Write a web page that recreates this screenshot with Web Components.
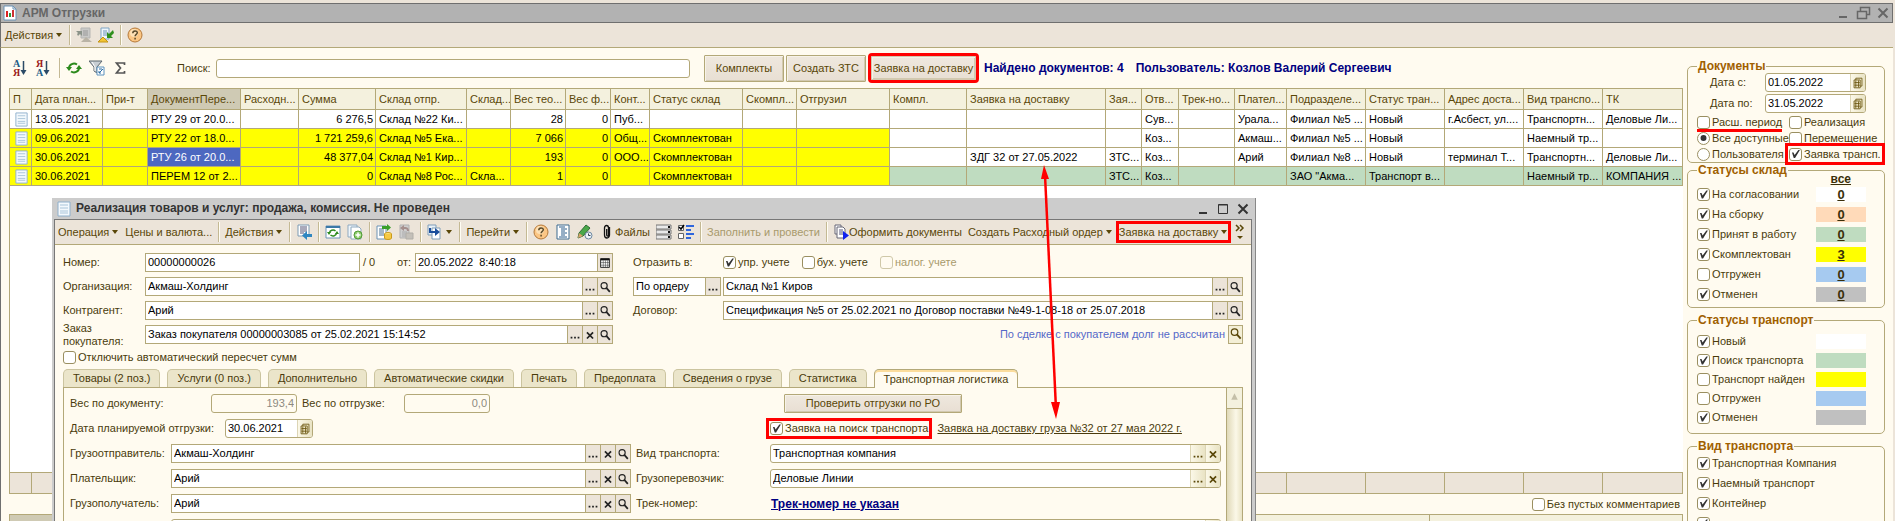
<!DOCTYPE html>
<html lang="ru">
<head>
<meta charset="utf-8">
<title>АРМ Отгрузки</title>
<style>
    html, body {
        margin: 0;
        height: 100%;
        overflow: hidden;
        background: #ece4d9;
        color: #4a3b0c;
        font: 11px/13px "Liberation Sans", Arial, sans-serif;
    }
    body {
        position: relative;
    }
</style>
</head>
<body>
<shipping-desk></shipping-desk>

<script>
const ICONS = {
    report: '<path d="M2 1h9l3 3v11H2z" fill="#fff" stroke="#6d93b5"/><path d="M11 1v3h3" fill="none" stroke="#6d93b5"/><path d="M4 6h2v6H4z" fill="#d22"/><path d="M7 8h2v4H7z" fill="#2a9a3a"/><path d="M10 5h2v7h-2z" fill="#c33"/>',
    doc: '<path d="M2 1h12v14H2z" fill="#f4f9fd" stroke="#8fb0cc"/><path d="M4 4h8M4 7h8M4 10h8M4 12h8" stroke="#a9c4d9"/>',
    loadOff: '<path d="M5 1h9v10H5z" fill="#c9c9c7" stroke="#b5b5b3"/><path d="M7 4h5M7 6h5M7 8h5" stroke="#999"/><path d="M0 4h6v5L4 7l-2 2-1-2 1-1z" fill="#8b9389"/><path d="M5 15l5-5 6 5z" fill="#b9b3a6"/>',
    load: '<path d="M3 1h8v11H3z" fill="#eef5fb" stroke="#7fa5c4"/><path d="M5 4h4M5 6h4M5 8h4" stroke="#6b94b8"/><path d="M15 3l-4 4-2-2v6h6L13 9l3-3z" fill="#2f8f1d"/><path d="M0 15l5-5 5 5z" fill="#f2c534" stroke="#c49415"/>',
    help: '<circle cx="8" cy="8" r="7" fill="#fbc684" stroke="#b4793a"/><circle cx="7" cy="6" r="4" fill="#fde0b5"/><path d="M5.800 6.200c0-3 4.500-3 4.500-.4 0 1.600-2.200 1.600-2.200 3.400M8.100 10.800v1.600" fill="none" stroke="#5a4a2a" stroke-width="1.500"/>',
    refresh: '<path d="M3 8a5 4.500 0 0 1 8-3.500M13 8a5 4.500 0 0 1-8 3.500" fill="none" stroke="#2c8a1c" stroke-width="2"/><path d="M0 7h6L3 11zM10 9h6l-3-4z" fill="#2c8a1c"/>',
    filter: '<path d="M0 1h13L8 7v6l-3-2V7z" fill="#c8ced3" stroke="#5b666f"/><path d="M3 2l3 5v4" fill="none" stroke="#fff"/><path d="M8 7h7v8H8z" fill="#fff" stroke="#5d92bd"/><path d="M10 9h3M10 13l4-4M10 11v2h2" stroke="#2f6ea5" fill="none"/>',
    sigma: '<path d="M12.500 5V3h-8l4 5-4 5h8v-2" fill="none" stroke="#555" stroke-width="1.700"/>',
    fromBase: '<path d="M2 1h11v11H2z" fill="#fff" stroke="#7d9bb3"/><path d="M4 3h7M4 5h7M4 7h7M4 9h4" stroke="#557"/><path d="M16 10h-5V7l-5 4.500 5 4.500v-3h5z" fill="#2f86c0"/>',
    reread: '<path d="M1 2h14v12H1z" fill="#fff" stroke="#6d93b5"/><path d="M1 2h14v2H1z" fill="#3a78a8"/><path d="M4.500 9a3.500 3 0 0 1 6-2M11.500 9a3.500 3 0 0 1-6 2" fill="none" stroke="#2c8a1c" stroke-width="1.500"/><path d="M2 8h4l-2 3zM10 10h4l-2-3z" fill="#2c8a1c"/>',
    copyNew: '<path d="M1 1h9v12H1z" fill="#eef5fb" stroke="#8fa9bf"/><path d="M4 3h8l2 2v10H4z" fill="#fff" stroke="#8fa9bf"/><circle cx="11" cy="11" r="4" fill="#8fce6d" stroke="#4f9a35"/><path d="M11 8.500v5M8.500 11h5" stroke="#fff" stroke-width="1.500"/>',
    post: '<path d="M1 2h9v13H1z" fill="#fff" stroke="#6d93b5"/><path d="M3 5h5M3 7h5M3 9h5M3 11h5" stroke="#48708f"/><path d="M6 2h5V0l4 3.500L11 7V5H6z" fill="#3aa02a"/><ellipse cx="12" cy="10" rx="3.500" ry="1.500" fill="#ffe477" stroke="#c99a1b"/><path d="M8.500 10v4a3.500 1.500 0 0 0 7 0v-4" fill="#f6c944" stroke="#c99a1b"/>',
    unpost: '<path d="M2 1h9v13H2z" fill="#cfcfcf" stroke="#b1b1b1"/><path d="M4 8h5M4 10h5M4 12h5" stroke="#aaa"/><path d="M11 7c0-4-3-4-5-4V1L2 4l4 3V5c2 0 3 0 3 2z" fill="#a58f8d"/><path d="M8 9h7v6H8z" fill="#c4c0b9" stroke="#b1aea8"/>',
    basis: '<path d="M1 1h8v10H1z" fill="#e8f1f8" stroke="#7f9db8"/><path d="M5 4h8v11H5z" fill="#fff" stroke="#7f9db8"/><path d="M2 4v5h6v3l5-4-5-4v3H4V4z" fill="#1c4f9c"/>',
    list: '<path d="M2 1h12v14H2z" fill="#fff" stroke="#3d6a8f"/><path d="M4 3h6M6 5h6M6 7h4M6 9h6M6 11h4M4 13h8" stroke="#2c5f8c"/>',
    pencil: '<path d="M1 14l1-5 7-8 4 3-7 8z" fill="#4aa84a" stroke="#2d6b35"/><path d="M1 14l1-5 4 3z" fill="#d8a36d"/><circle cx="11.500" cy="11.500" r="3.500" fill="#eef3f8" stroke="#6a86a0"/><path d="M11.500 9.500v2h2" stroke="#345" fill="none"/>',
    clip: '<path d="M10.500 3v8a2.500 3 0 0 1-5 0V4a2 2.500 0 0 1 4 0v7a.8 1 0 0 1-1.800 0V5" fill="none" stroke="#111" stroke-width="1.300"/>',
    bars: '<path d="M0 1h15v4H0zM0 6h15v4H0zM0 11h15v4H0z" fill="#e9e9e9" stroke="#777"/><path d="M12 2h2v2h-2zM12 7h2v2h-2zM12 12h2v2h-2z" fill="#111"/>',
    checks: '<path d="M0.500 1.500h5v5h-5zM0.500 9.500h5v5h-5z" fill="#fff" stroke="#666"/><path d="M1 3l2 2 3-4" fill="none" stroke="#000" stroke-width="1.500"/><path d="M8 2h8M8 6h5M8 10h8M8 14h5" stroke="#2f66dd" stroke-width="2"/>',
    docsRun: '<path d="M2 1h6v9H2z" fill="#fff" stroke="#667"/><path d="M4 3h6l2 2v9H4z" fill="#fff" stroke="#667"/><path d="M6 6h4M6 8h4M6 10h4" stroke="#557"/><path d="M10 7l6 4.500-6 4.500z" fill="#12e"/>',
    calendar: '<path d="M5.500 2.500h7v9h-7z" fill="#f7f1d4" stroke="#6a5610"/><path d="M3.500 4.500h7v9h-7z" fill="#f7f1d4" stroke="#6a5610"/><path d="M4 7.500h6M4 10.500h6M5.500 5v8M8.500 5v8" stroke="#6a5610"/>',
    grid: '<path d="M3 3h10v10H3z" fill="#fff" stroke="#111"/><path d="M3 4h10" stroke="#111" stroke-width="2"/><path d="M3 7.500h10M3 10.500h10M6 5v8M8.500 5v8M11 5v8" stroke="#333" stroke-width=".6"/>',
    dots: '<path d="M3 10h2v2H3zM7 10h2v2H7zM11 10h2v2h-2z" fill="currentColor"/>',
    cross: '<path d="M4.500 5l7 7M11.500 5l-7 7" stroke="currentColor" stroke-width="2"/>',
    find: '<circle cx="7" cy="6.500" r="3.500" fill="none" stroke="currentColor" stroke-width="1.300"/><path d="M9.500 9l4 4.500" stroke="currentColor" stroke-width="2"/>',
    min: '<path d="M4 12h8" stroke="currentColor" stroke-width="2"/>',
    max: '<path d="M3.500 3.500h9v9h-9zM3.500 4h9" fill="none" stroke="currentColor"/>',
    restore: '<path d="M5.500 6V2.500h9v7H12M2.500 6.500h9v7h-9z" fill="none" stroke="currentColor" stroke-width="1.500"/>',
    close: '<path d="M3.500 3.500l9 9M12.500 3.500l-9 9" stroke="currentColor" stroke-width="2"/>',
    down: '<path d="M5 6h6l-3 4z" fill="currentColor"/>',
    up: '<path d="M8 4l4 8H4z" fill="#c4bfa8"/>',
    more: '<path d="M4 1l3 3-3 3M8 1l3 3-3 3" fill="none" stroke="currentColor" stroke-width="1.500"/><path d="M5 12h6l-3 3z" fill="currentColor"/>'
};

class UiIcon extends HTMLElement {
    connectedCallback() {
        this.attachShadow({ mode: 'open' });
        this.shadowRoot.innerHTML = `
            <style>
                :host { display: inline-flex; flex: none; width: 16px; height: 16px; }
                :host([name=more]) { width: 12px; }
                svg { width: 100%; height: 100%; }
            </style>
            <svg viewBox="0 0 16 16" preserveAspectRatio="xMidYMid slice">${ICONS[this.getAttribute('name')] || ''}</svg>
        `;
    }
}
customElements.define('ui-icon', UiIcon);

// Sort buttons: two stacked letters and a down arrow
class SortIcon extends HTMLElement {
    connectedCallback() {
        const [a, b] = this.getAttribute('letters');
        const colors = { 'А': '#1d5c86', 'Я': '#9c1c1c' };
        this.attachShadow({ mode: 'open' });
        this.shadowRoot.innerHTML = `
            <style>
                :host { display: inline-flex; width: 16px; height: 18px; align-items: center; }
                .letters { display: flex; flex-direction: column; font: bold 10px/9px "Liberation Serif", serif; }
                svg { width: 7px; height: 16px; }
            </style>
            <span class="letters"><span style="color:${colors[a]}">${a}</span><span style="color:${colors[b]}">${b}</span></span>
            <svg viewBox="0 0 7 16"><path d="M3.500 1v11" stroke="#2b4a66" stroke-width="1.500"/><path d="M0.500 10h6l-3 5z" fill="#2b4a66"/></svg>
        `;
    }
}
customElements.define('sort-icon', SortIcon);

class ToolButton extends HTMLElement {
    connectedCallback() {
        const icon = this.getAttribute('icon');
        this.attachShadow({ mode: 'open' });
        this.shadowRoot.innerHTML = `
            <style>
                :host { display: inline-flex; flex: none; }
                button {
                    display: inline-flex;
                    align-items: center;
                    padding: 0;
                    border: 0;
                    background: none;
                    color: #5a4708;
                    font: inherit;
                    white-space: nowrap;
                }
                .arrow { width: 8px; margin-left: 2px; }
                :host([disabled]) button { color: #a89a6c; }
                :host([marked]) button { outline: 3px solid #f00; }
            </style>
            <button ${icon ? `aria-label="${icon}"` : ''}>
                ${icon ? `<ui-icon name="${icon}"></ui-icon>` : ''}<slot></slot>
                ${this.hasAttribute('arrow') ? '<ui-icon class="arrow" name="down"></ui-icon>' : ''}
            </button>
        `;
    }
}
customElements.define('tool-button', ToolButton);

class ToolSep extends HTMLElement {
    connectedCallback() {
        this.attachShadow({ mode: 'open' });
        this.shadowRoot.innerHTML = `
            <style>
                :host { display: block; flex: none; width: 1px; height: 20px; background: #c4b994; box-shadow: 1px 0 #fffdf4; }
            </style>
        `;
    }
}
customElements.define('tool-sep', ToolSep);

class PushButton extends HTMLElement {
    connectedCallback() {
        this.attachShadow({ mode: 'open' });
        this.shadowRoot.innerHTML = `
            <style>
                :host { display: inline-block; flex: none; height: 27px; }
                button {
                    width: 100%;
                    height: 100%;
                    padding: 0;
                    border: 1px solid #b3a878;
                    border-radius: 1px;
                    box-shadow: inset 1px 1px #f7f2e8, inset -1px -1px #d2c9b0;
                    background: linear-gradient(#efe8de, #e8dfd3);
                    color: #5a4708;
                    font: inherit;
                    white-space: nowrap;
                }
                :host([marked]) button { border-color: #d2c9b0; outline: 3px solid #f00; }
            </style>
            <button><slot></slot></button>
        `;
    }
}
customElements.define('push-button', PushButton);

class TickBox extends HTMLElement {
    connectedCallback() {
        const type = this.getAttribute('type') || 'checkbox';
        this.attachShadow({ mode: 'open' });
        this.shadowRoot.innerHTML = `
            <style>
                :host { display: inline-flex; flex: none; }
                label { display: inline-flex; align-items: center; gap: 2px; white-space: nowrap; }
                input {
                    appearance: none;
                    flex: none;
                    width: 13px;
                    height: 13px;
                    margin: 0;
                    border: 1px solid #9a8f60;
                    border-radius: 3px;
                    background: #fff;
                }
                input[type=radio] { border-radius: 50%; }
                input:checked::after {
                    content: "";
                    display: block;
                    width: 11px;
                    height: 11px;
                    background: #333;
                    clip-path: polygon(18% 36%, 32% 36%, 42% 58%, 76% 14%, 90% 14%, 46% 86%, 34% 86%);
                }
                input[type=radio]:checked::after { clip-path: circle(27%); }
                :host([disabled]) label { color: #a89a6c; }
                :host([disabled]) input { border-color: #cfc8a8; background: #fffbf0; }
                :host([marked]) label { outline: 3px solid #f00; outline-offset: 1px; }
                :host([underlined]) label { box-shadow: 0 3px #f00; }
            </style>
            <label>
                <input type="${type}" ${this.hasAttribute('checked') ? 'checked' : ''} ${this.hasAttribute('disabled') ? 'disabled' : ''}>
                <slot></slot>
            </label>
        `;
    }
}
customElements.define('tick-box', TickBox);

// Labelled text box with the row of small buttons on its right edge
class EntryField extends HTMLElement {
    connectedCallback() {
        const label = this.getAttribute('label') || '';
        const buttons = (this.getAttribute('buttons') || '').split(' ').filter(Boolean);
        this.attachShadow({ mode: 'open' });
        this.shadowRoot.innerHTML = `
            <style>
                :host { display: flex; align-items: center; height: 19px; min-width: 0; }
                label { flex: none; width: var(--label, auto); }
                .box {
                    box-sizing: border-box;
                    display: flex;
                    flex: 1;
                    min-width: 0;
                    height: 19px;
                    border: 1px solid #b3a878;
                    background: #fff;
                }
                :host([round]) .box { border-radius: 3px; overflow: hidden; }
                input {
                    flex: 1;
                    min-width: 0;
                    padding: 0 2px;
                    border: 0;
                    outline: 0;
                    background: none;
                    color: #000;
                    font: inherit;
                }
                :host([number]) input { text-align: right; color: #8d8a80; }
                :host([number]) .box { background: #fffbf0; }
                button {
                    display: flex;
                    align-items: center;
                    justify-content: center;
                    box-sizing: border-box;
                    width: 15px;
                    padding: 0;
                    border: 0;
                    border-left: 1px solid #b3a878;
                    background: #ece4d9;
                    color: #222;
                }
                :host([round]) button { border-left-color: #dcd5b5; background: linear-gradient(90deg, #fbf8e8, #e9e3c4); color: #5a4708; }
                ui-icon { width: 14px; height: 14px; }
            </style>
            ${label ? `<label for="v">${label}</label>` : ''}
            <div class="box">
                <input id="v" value="${this.getAttribute('value') || ''}" ${label ? '' : `aria-label="${this.getAttribute('hint') || 'Значение'}"`}>
                ${buttons.map(b => `<button aria-label="${b}"><ui-icon name="${b}"></ui-icon></button>`).join('')}
            </div>
        `;
    }
}
customElements.define('entry-field', EntryField);

class GroupBox extends HTMLElement {
    connectedCallback() {
        this.attachShadow({ mode: 'open' });
        this.shadowRoot.innerHTML = `
            <style>
                :host { display: block; }
                fieldset {
                    margin: 0;
                    padding: var(--pad, 0 9px 1px 9px);
                    border: 1px solid #b3a878;
                    border-radius: 5px;
                    min-width: 0;
                }
                legend { padding: 0 1px; font: bold 12px/14px "Liberation Sans", Arial, sans-serif; color: #a06000; }
            </style>
            <fieldset>
                <legend>${this.getAttribute('caption')}</legend>
                <slot></slot>
            </fieldset>
        `;
    }
}
customElements.define('group-box', GroupBox);

class StatusRow extends HTMLElement {
    connectedCallback() {
        const color = this.getAttribute('color');
        const count = this.getAttribute('count');
        this.attachShadow({ mode: 'open' });
        this.shadowRoot.innerHTML = `
            <style>
                :host { display: flex; align-items: center; justify-content: space-between; height: 15px; }
                .swatch { width: 50px; height: 15px; margin-right: 9px; background: ${color}; text-align: center; }
                a { font: bold 13px/15px "Liberation Sans", Arial, sans-serif; color: #3a2f0a; text-decoration: underline; }
            </style>
            <tick-box ${this.hasAttribute('checked') ? 'checked' : ''}><slot></slot></tick-box>
            ${color ? `<div class="swatch">${count ? `<a href="#">${count}</a>` : ''}</div>` : ''}
        `;
    }
}
customElements.define('status-row', StatusRow);

const COLUMNS = [
    ['П', 22], ['Дата план...', 71], ['При-т', 45], ['ДокументПере...', 93], ['Расходн...', 58],
    ['Сумма', 77], ['Склад отпр.', 91], ['Склад...', 44], ['Вес тео...', 55], ['Вес ф...', 45],
    ['Конт...', 39], ['Статус склад', 93], ['Скомпл...', 54], ['Отгрузил', 93], ['Компл.', 77],
    ['Заявка на доставку', 139], ['Зая...', 36], ['Отв...', 37], ['Трек-но...', 56], ['Плател...', 52],
    ['Подразделе...', 79], ['Статус тран...', 79], ['Адрес доста...', 79], ['Вид транспо...', 79], ['ТК', 0]
];
const NUMERIC = [5, 8, 9];
const ROWS = [
    { left: '#fff', right: '#fff', cells: ['', '13.05.2021', '', 'РТУ 29 от 20.0...', '', '6 276,5', 'Склад №22 Ки...', '', '28', '0', 'Пуб...', '', '', '', '', '', '', 'Сув...', '', 'Урала...', 'Филиал №5 ...', 'Новый', 'г.Асбест, ул....', 'Транспортн...', 'Деловые Ли...'] },
    { left: '#ff0', right: '#fff', cells: ['', '09.06.2021', '', 'РТУ 22 от 18.0...', '', '1 721 259,6', 'Склад №5 Ека...', '', '7 066', '0', 'Общ...', 'Скомплектован', '', '', '', '', '', 'Коз...', '', 'Акмаш...', 'Филиал №5 ...', 'Новый', '', 'Наемный тр...', ''] },
    { left: '#ff0', right: '#fff', selected: 3, cells: ['', '30.06.2021', '', 'РТУ 26 от 20.0...', '', '48 377,04', 'Склад №1 Кир...', '', '193', '0', 'ООО...', 'Скомплектован', '', '', '', 'ЗДГ 32 от 27.05.2022', 'ЗТС...', 'Коз...', '', 'Арий', 'Филиал №8 ...', 'Новый', 'терминал Т...', 'Транспортн...', 'Деловые Ли...'] },
    { left: '#ff0', right: '#bfdcc0', cells: ['', '30.06.2021', '', 'ПЕРЕМ 12 от 2...', '', '0', 'Склад №8 Рос...', 'Скла...', '1', '0', '', 'Скомплектован', '', '', '', '', 'ЗТС...', 'Коз...', '', '', 'ЗАО "Акма...', 'Транспорт в...', '', 'Наемный тр...', 'КОМПАНИЯ ...'] }
];

class DocTable extends HTMLElement {
    connectedCallback() {
        const cols = COLUMNS.map(c => `<col${c[1] ? ` style="width:${c[1]}px"` : ''}>`).join('');
        const cell = (row, text, i) => {
            const bg = i === row.selected ? '#4d68c0' : i < 14 ? row.left : row.right;
            const cls = [NUMERIC.includes(i) ? 'num' : '', i === row.selected ? 'sel' : '', i === 0 ? 'pic' : ''].join(' ').trim();
            return `<td class="${cls}" style="background:${bg}">${i === 0 ? '<ui-icon name="doc"></ui-icon>' : text}</td>`;
        };
        this.attachShadow({ mode: 'open' });
        this.shadowRoot.innerHTML = `
            <style>
                :host {
                    box-sizing: border-box;
                    display: flex;
                    flex-direction: column;
                    justify-content: space-between;
                    background: #fff;
                    border: 1px solid #b3a878;
                    border-right-width: 0;
                }
                table { width: 100%; table-layout: fixed; border-collapse: separate; border-spacing: 0; color: #000; }
                th, td {
                    box-sizing: border-box;
                    height: 19px;
                    padding: 1px 2px 0 3px;
                    border-right: 1px solid #b3a878;
                    border-bottom: 1px solid #b3a878;
                    overflow: hidden;
                    white-space: nowrap;
                    text-align: left;
                    font-weight: normal;
                }
                th { height: 21px; background: #f4f1de; color: #5a4708; }
                th:nth-child(4) { background: #cfcab4; }
                td.num { text-align: right; }
                td.sel { color: #fff; }
                td.pic { padding: 0 0 0 4px; }
                td ui-icon { width: 15px; height: 15px; vertical-align: top; }
                .foot td { height: 21px; background: #ece4d9; border-bottom: 0; border-top: 1px solid #b3a878; }
            </style>
            <table>
                <colgroup>${cols}</colgroup>
                <thead><tr>${COLUMNS.map(c => `<th>${c[0]}</th>`).join('')}</tr></thead>
                <tbody>${ROWS.map(r => `<tr>${r.cells.map((t, i) => cell(r, t, i)).join('')}</tr>`).join('')}</tbody>
            </table>
            <table class="foot" aria-hidden="true">
                <colgroup>${cols}</colgroup>
                <tr>${COLUMNS.map(() => '<td></td>').join('')}</tr>
            </table>
        `;
    }
}
customElements.define('doc-table', DocTable);

class TabStrip extends HTMLElement {
    connectedCallback() {
        const tabs = this.getAttribute('tabs').split('|');
        const active = Number(this.getAttribute('active'));
        this.attachShadow({ mode: 'open' });
        this.shadowRoot.innerHTML = `
            <style>
                :host { display: flex; flex-direction: column; }
                .tabs { display: flex; gap: 7px; height: 18px; }
                .tabs button {
                    flex: none;
                    height: 18px;
                    padding: 0 9px;
                    border: 1px solid #cbc49f;
                    border-bottom: 0;
                    border-radius: 5px 5px 0 0;
                    background: #ebe5ca;
                    color: #4a3b0c;
                    font: inherit;
                    white-space: nowrap;
                }
                .tabs button.on {
                    height: 19px;
                    border-color: #b3a878;
                    box-shadow: inset 0 2px #fbdc9c;
                    background: #fffbf0;
                    z-index: 1;
                }
                .page { display: flex; flex: 1; border: 1px solid #b3a878; }
                .body { flex: 1; min-width: 0; }
                .bar { width: 15px; border-left: 1px solid #b3a878; background: linear-gradient(90deg, #e0d9b8, #fbf8e8 60%, #e9e3c4); }
                .bar button { display: block; width: 15px; height: 21px; padding: 0; border: 0; border-bottom: 1px solid #b3a878; background: #f4f1de; }
                .bar ui-icon { width: 13px; height: 13px; }
            </style>
            <div class="tabs" role="tablist">
                ${tabs.map((t, i) => `<button role="tab" class="${i === active ? 'on' : ''}">${t}</button>`).join('')}
            </div>
            <div class="page">
                <div class="body"><slot></slot></div>
                <div class="bar"><button aria-label="Вверх"><ui-icon name="up"></ui-icon></button></div>
            </div>
        `;
    }
}
customElements.define('tab-strip', TabStrip);

class SaleWindow extends HTMLElement {
    connectedCallback() {
        this.attachShadow({ mode: 'open' });
        this.shadowRoot.innerHTML = `
            <style>
                :host {
                    box-sizing: border-box;
                    display: flex;
                    flex-direction: column;
                    border: solid #ccc;
                    border-width: 0 3px 0 2px;
                    box-shadow: inset 1px 0 #777, inset -1px 0 #777, 1px 0 #888;
                    background: #fffbf0;
                    padding: 0 1px;
                }
                .title {
                    display: flex;
                    align-items: center;
                    gap: 4px;
                    height: 21px;
                    margin: 0 -1px;
                    padding: 0 1px 0 2px;
                    background: #ccc;
                    border-bottom: 1px solid #777;
                    color: #333;
                    font: bold 12px/15px "Liberation Sans", Arial, sans-serif;
                }
                .title h2 { flex: 1; margin: 0; font: inherit; }
                .title .ctl { display: flex; gap: 4px; }
                .tools {
                    display: flex;
                    align-items: center;
                    gap: 6px;
                    height: 24px;
                    padding: 0 2px 0 3px;
                    background: #ece4d9;
                    border-bottom: 1px solid #b3a878;
                }
                .form { display: flex; flex-direction: column; flex: 1; padding: 8px 8px 0 8px; }
                .head { display: grid; grid-template-columns: 550px 1fr; gap: 5px 20px; }
                .row { display: flex; align-items: center; height: 19px; }
                .left { --label: 82px; }
                .right { --label: 90px; }
                .num { flex: 1; }
                .slash { width: 34px; padding-left: 3px; }
                .date { width: 216px; --label: 18px; }
                .flags { gap: 12px; }
                .flags .cap { width: 78px; }
                .short { width: 88px; margin-right: 2px; }
                .debt { justify-content: flex-end; gap: 3px; color: #5468c8; }
                .grow { flex: 1; }
                .one { width: 15px; height: 19px; padding: 0; border: 1px solid #b3a878; background: #f4efd6; color: #5a4708; }
                .one ui-icon { width: 13px; height: 15px; }
                .recalc { margin: 7px 0 5px 0; }
                tab-strip { flex: 1; }
                .page { display: grid; grid-template-columns: 561px 1fr; gap: 6px 5px; padding: 6px 5px 0 6px; }
                .page .left { --label: 101px; }
                .page .right { --label: 134px; }
                .weight { width: 227px; --label: 141px; margin-right: 5px; }
                .weight + .weight { width: 188px; --label: 102px; }
                .plan { width: 243px; --label: 155px; }
                push-button { width: 178px; height: 19px; margin-left: 148px; }
                .find { padding-left: 134px; gap: 9px; }
                .find a { color: #4a3b0c; }
                .track span { width: 135px; }
                .track a { color: #000080; font: bold 12px/14px "Liberation Sans", Arial, sans-serif; }
                .wide { grid-column: 1 / 3; --label: 101px; }
            </style>
            <div class="title">
                <ui-icon name="doc"></ui-icon>
                <h2>Реализация товаров и услуг: продажа, комиссия. Не проведен</h2>
                <span class="ctl"><ui-icon name="min"></ui-icon><ui-icon name="max"></ui-icon><ui-icon name="close"></ui-icon></span>
            </div>
            <div class="tools">
                <tool-button arrow>Операция</tool-button>
                <tool-button>Цены и валюта...</tool-button>
                <tool-sep></tool-sep>
                <tool-button arrow>Действия</tool-button>
                <tool-sep></tool-sep>
                <tool-button icon="fromBase"></tool-button>
                <tool-sep></tool-sep>
                <tool-button icon="reread"></tool-button>
                <tool-button icon="copyNew"></tool-button>
                <tool-sep></tool-sep>
                <tool-button icon="post"></tool-button>
                <tool-button icon="unpost"></tool-button>
                <tool-sep></tool-sep>
                <tool-button icon="basis" arrow></tool-button>
                <tool-sep></tool-sep>
                <tool-button arrow>Перейти</tool-button>
                <tool-sep></tool-sep>
                <tool-button icon="help"></tool-button>
                <tool-button icon="list"></tool-button>
                <tool-button icon="pencil"></tool-button>
                <tool-button icon="clip">Файлы</tool-button>
                <tool-button icon="bars"></tool-button>
                <tool-button icon="checks"></tool-button>
                <tool-sep></tool-sep>
                <tool-button disabled>Заполнить и провести</tool-button>
                <tool-sep></tool-sep>
                <tool-button icon="docsRun">Оформить документы</tool-button>
                <tool-button arrow>Создать Расходный ордер</tool-button>
                <tool-button arrow marked>Заявка на доставку</tool-button>
                <tool-button icon="more"></tool-button>
            </div>
            <div class="form">
                <div class="head">
                    <div class="row left">
                        <entry-field class="num" label="Номер:" value="00000000026"></entry-field>
                        <span class="slash">/ 0</span>
                        <entry-field class="date" label="от:" value="20.05.2022  8:40:18" buttons="grid"></entry-field>
                    </div>
                    <div class="row flags">
                        <span class="cap">Отразить в:</span>
                        <tick-box checked>упр. учете</tick-box>
                        <tick-box>бух. учете</tick-box>
                        <tick-box disabled>налог. учете</tick-box>
                    </div>
                    <entry-field class="left" label="Организация:" value="Акмаш-Холдинг" buttons="dots find"></entry-field>
                    <div class="row">
                        <entry-field class="short" hint="Вид склада" value="По ордеру" buttons="dots"></entry-field>
                        <entry-field class="grow" hint="Склад" value="Склад №1 Киров" buttons="dots find"></entry-field>
                    </div>
                    <entry-field class="left" label="Контрагент:" value="Арий" buttons="dots find"></entry-field>
                    <entry-field class="right" label="Договор:" value="Спецификация №5 от 25.02.2021 по Договор поставки №49-1-08-18 от 25.07.2018" buttons="dots find"></entry-field>
                    <entry-field class="left" label="Заказ<br>покупателя:" value="Заказ покупателя 00000003085 от 25.02.2021 15:14:52" buttons="dots cross find"></entry-field>
                    <div class="row debt">
                        <span>По сделке с покупателем долг не рассчитан</span>
                        <button class="one" aria-label="Рассчитать"><ui-icon name="find"></ui-icon></button>
                    </div>
                </div>
                <tick-box class="recalc">Отключить автоматический пересчет сумм</tick-box>
                <tab-strip active="8" tabs="Товары (2 поз.)|Услуги (0 поз.)|Дополнительно|Автоматические скидки|Печать|Предоплата|Сведения о грузе|Статистика|Транспортная логистика">
                    <div class="page">
                        <div class="row">
                            <entry-field class="weight" round number label="Вес по документу:" value="193,4"></entry-field>
                            <entry-field class="weight" round number label="Вес по отгрузке:" value="0,0"></entry-field>
                        </div>
                        <div class="row"><push-button>Проверить отгрузки по РО</push-button></div>
                        <div class="row">
                            <entry-field class="plan" round label="Дата планируемой отгрузки:" value="30.06.2021" buttons="calendar"></entry-field>
                        </div>
                        <div class="row find">
                            <tick-box checked marked>Заявка на поиск транспорта</tick-box>
                            <a href="#">Заявка на доставку груза №32 от 27 мая 2022 г.</a>
                        </div>
                        <entry-field class="left" label="Грузоотправитель:" value="Акмаш-Холдинг" buttons="dots cross find"></entry-field>
                        <entry-field class="right" round label="Вид транспорта:" value="Транспортная компания" buttons="dots cross"></entry-field>
                        <entry-field class="left" label="Плательщик:" value="Арий" buttons="dots cross find"></entry-field>
                        <entry-field class="right" round label="Грузоперевозчик:" value="Деловые Линии" buttons="dots cross"></entry-field>
                        <entry-field class="left" label="Грузополучатель:" value="Арий" buttons="dots cross find"></entry-field>
                        <div class="row track"><span>Трек-номер:</span><a href="#">Трек-номер не указан</a></div>
                        <entry-field class="wide" round label="&nbsp;" buttons="dots"></entry-field>
                    </div>
                </tab-strip>
            </div>
        `;
    }
}
customElements.define('sale-window', SaleWindow);

class FilterPanel extends HTMLElement {
    connectedCallback() {
        this.attachShadow({ mode: 'open' });
        this.shadowRoot.innerHTML = `
            <style>
                :host { display: flex; flex-direction: column; overflow: hidden; }
                .dates { display: flex; flex-direction: column; gap: 2px; padding: 0 9px 2px 13px; --label: 55px; }
                .flags { display: grid; grid-template-columns: 91px 1fr; gap: 2px 1px; }
                .flags tick-box { height: 14px; }
                .list { display: flex; flex-direction: column; gap: 5px; }
                .all { height: 10px; padding-right: 24px; text-align: right; line-height: 5px; }
                .all a { color: #3a2f0a; font-weight: bold; font-size: 12px; }
                .store { --pad: 0 9px 5px 9px; }
                .transport { margin-top: 5px; --pad: 7px 9px 8px 9px; }
                .transport .list { gap: 4px; }
                .kind { margin-top: 5px; --pad: 3px 9px 8px 9px; }
            </style>
            <group-box caption="Документы">
                <div class="dates">
                    <entry-field round label="Дата с:" value="01.05.2022" buttons="calendar"></entry-field>
                    <entry-field round label="Дата по:" value="31.05.2022" buttons="calendar"></entry-field>
                </div>
                <div class="flags">
                    <tick-box underlined>Расш. период</tick-box><tick-box>Реализация</tick-box>
                    <tick-box type="radio" checked>Все доступные</tick-box><tick-box>Перемещение</tick-box>
                    <tick-box type="radio">Пользователя</tick-box><tick-box checked marked>Заявка трансп.</tick-box>
                </div>
            </group-box>
            <group-box class="store" caption="Статусы склад">
                <div class="all"><a href="#">все</a></div>
                <div class="list">
                    <status-row checked color="#fff" count="0">На согласовании</status-row>
                    <status-row checked color="#ffdab9" count="0">На сборку</status-row>
                    <status-row checked color="#bfdcc0" count="0">Принят в работу</status-row>
                    <status-row checked color="#ff0" count="3">Скомплектован</status-row>
                    <status-row color="#a6caf0" count="0">Отгружен</status-row>
                    <status-row checked color="#c0c0c0" count="0">Отменен</status-row>
                </div>
            </group-box>
            <group-box class="transport" caption="Статусы транспорт">
                <div class="list">
                    <status-row checked color="#fff">Новый</status-row>
                    <status-row checked color="#bfdcc0">Поиск транспорта</status-row>
                    <status-row color="#ff0">Транспорт найден</status-row>
                    <status-row color="#a6caf0">Отгружен</status-row>
                    <status-row checked color="#c0c0c0">Отменен</status-row>
                </div>
            </group-box>
            <group-box class="kind" caption="Вид транспорта">
                <div class="list">
                    <status-row checked>Транспортная Компания</status-row>
                    <status-row checked>Наемный транспорт</status-row>
                    <status-row checked>Контейнер</status-row>
                    <status-row checked></status-row>
                </div>
            </group-box>
        `;
    }
}
customElements.define('filter-panel', FilterPanel);

class ShippingDesk extends HTMLElement {
    connectedCallback() {
        this.attachShadow({ mode: 'open' });
        this.shadowRoot.innerHTML = `
            <style>
                :host {
                    box-sizing: border-box;
                    display: flex;
                    flex-direction: column;
                    height: 100vh;
                    padding: 3px 2px 0 0;
                }
                .title {
                    display: flex;
                    align-items: center;
                    gap: 4px;
                    height: 18px;
                    padding: 0 1px;
                    background: #b2b2b2;
                    border: 1px solid #6f6f6f;
                    color: #666;
                    font: bold 12px/15px "Liberation Sans", Arial, sans-serif;
                }
                .title h1 { flex: 1; margin: 0; font: inherit; }
                .title .ctl { display: flex; gap: 4px; }
                .tools {
                    display: flex;
                    align-items: center;
                    gap: 6px;
                    height: 24px;
                    padding: 0 4px;
                    border-bottom: 1px solid #b3a878;
                    border-left: 1px solid #6f6f6f;
                }
                .main { display: flex; flex: 1; min-height: 0; padding: 0 8px; gap: 4px; background: #fffbf0; border-left: 1px solid #6f6f6f; }
                .work { display: flex; flex-direction: column; flex: 1; min-width: 0; }
                .search { display: flex; align-items: center; height: 40px; padding-left: 4px; }
                .search sort-icon { margin-right: 7px; }
                .search .tool { margin-right: 7px; }
                .search tool-sep { margin-right: 6px; }
                .query { width: 513px; margin: 0 14px 0 49px; --label: 39px; }
                .search push-button { width: 80px; margin-right: 2px; }
                .search push-button[marked] { width: 105px; height: 24px; margin: 0 8px 0 3px; }
                .info { display: flex; gap: 12px; color: #000080; font: bold 12px/14px "Liberation Sans", Arial, sans-serif; white-space: nowrap; }
                doc-table { flex: 1; min-height: 0; }
                .blank { display: flex; align-items: center; justify-content: flex-end; height: 20px; padding-right: 3px; }
                .next { display: flex; flex: none; height: 6px; border: 1px solid #b3a878; border-bottom: 0; background: #f4f1de; }
                .next span { flex: 1; border-right: 1px solid #b3a878; }
                .next .first { flex: none; width: 86px; background: #cfcab4; }
                .next .last { flex: none; width: 252px; border: 0; }
                filter-panel { flex: none; width: 198px; padding-top: 11px; }
            </style>
            <div class="title">
                <ui-icon name="report"></ui-icon>
                <h1>АРМ Отгрузки</h1>
                <span class="ctl"><ui-icon name="min"></ui-icon><ui-icon name="restore"></ui-icon><ui-icon name="close"></ui-icon></span>
            </div>
            <div class="tools">
                <tool-button arrow>Действия</tool-button>
                <tool-sep></tool-sep>
                <tool-button icon="loadOff"></tool-button>
                <tool-button icon="load"></tool-button>
                <tool-sep></tool-sep>
                <tool-button icon="help"></tool-button>
            </div>
            <div class="main">
                <div class="work">
                    <div class="search">
                        <sort-icon letters="АЯ"></sort-icon>
                        <sort-icon letters="ЯА"></sort-icon>
                        <tool-sep></tool-sep>
                        <tool-button class="tool" icon="refresh"></tool-button>
                        <tool-button class="tool" icon="filter"></tool-button>
                        <tool-button icon="sigma"></tool-button>
                        <entry-field class="query" round label="Поиск:"></entry-field>
                        <push-button>Комплекты</push-button>
                        <push-button>Создать ЗТС</push-button>
                        <push-button marked>Заявка на доставку</push-button>
                        <div class="info"><span>Найдено документов: 4</span><span>Пользователь: Козлов Валерий Сергеевич</span></div>
                    </div>
                    <doc-table></doc-table>
                    <div class="blank"><tick-box>Без пустых комментариев</tick-box></div>
                    <div class="next"><span class="first"></span><span></span><span class="last"></span></div>
                </div>
                <filter-panel></filter-panel>
            </div>
        `;
    }
}
customElements.define('shipping-desk', ShippingDesk);

// Red double-headed arrow that ties the order in the list to the link in the document
class LinkArrow extends HTMLElement {
    connectedCallback() {
        this.attachShadow({ mode: 'open' });
        this.shadowRoot.innerHTML = `
            <style>
                :host { display: block; pointer-events: none; }
                svg { display: block; }
            </style>
            <svg width="22" height="254" viewBox="0 0 22 254">
                <path d="M5 10l11 234" stroke="#f00" stroke-width="2.500"/>
                <path d="M4 0l5 14H1zM16 254l4-17h-9z" fill="#f00"/>
            </svg>
        `;
    }
}
customElements.define('link-arrow', LinkArrow);
</script>

<style>
    sale-window {
        position: absolute;
        left: 52px;
        top: 198px;
        bottom: -24px;
        width: 1203px;
    }
    link-arrow {
        position: absolute;
        left: 1040px;
        top: 165px;
    }
</style>
<sale-window></sale-window>
<link-arrow></link-arrow>
</body>
</html>
